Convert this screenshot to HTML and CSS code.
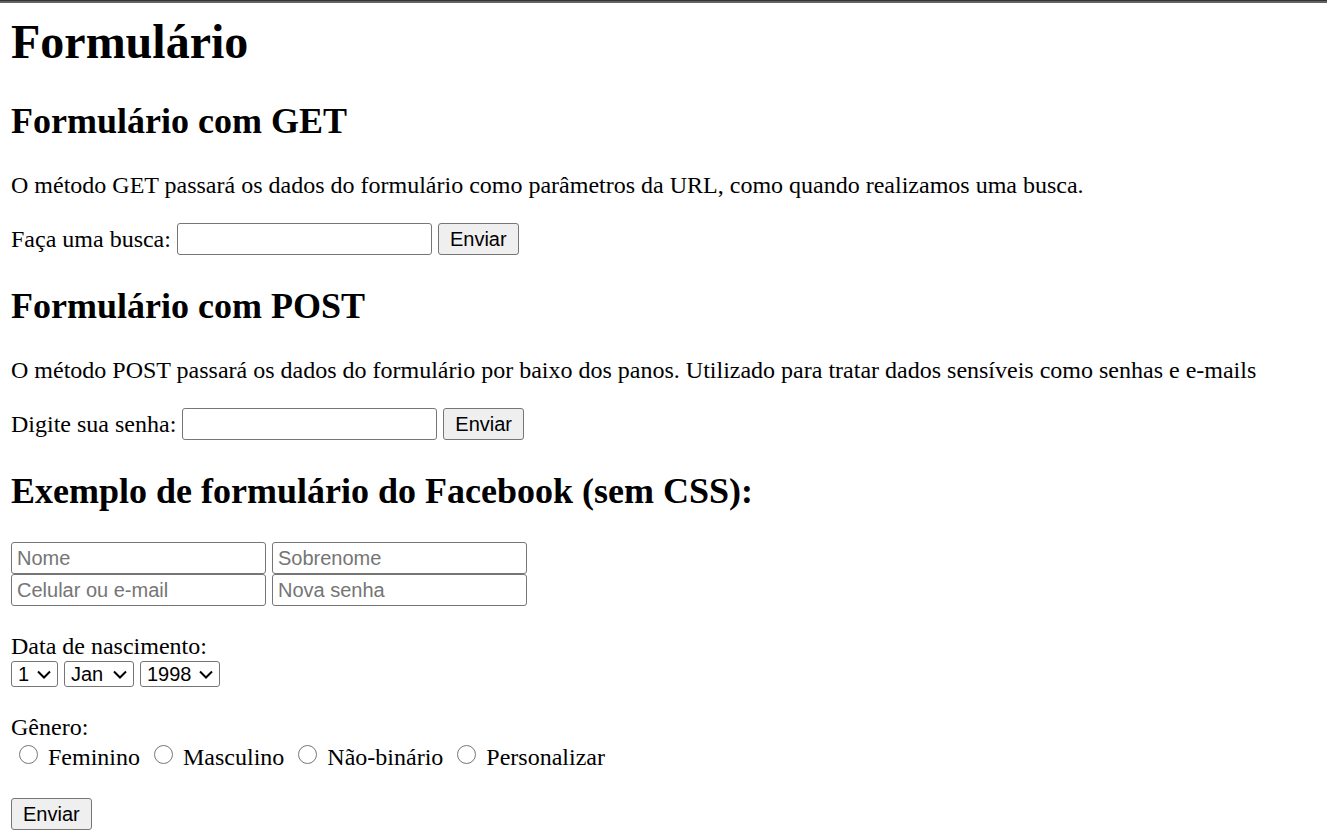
FILE: index.html
```html
<!DOCTYPE html>
<html lang="pt-BR">
<head>
<meta charset="utf-8">
<title>Formulário</title>
<link rel="stylesheet" href="styles.css">
</head>
<body>
<main class="page">
  <h1 class="title">Formulário</h1>

  <h2 class="heading">Formulário com GET</h2>
  <p class="text">O método GET passará os dados do formulário como parâmetros da URL, como quando realizamos uma busca.</p>
  <form class="row">
    <label for="busca">Faça uma busca:</label>
    <input class="field" type="text" id="busca" name="busca">
    <button class="button" type="submit">Enviar</button>
  </form>

  <h2 class="heading">Formulário com POST</h2>
  <p class="text">O método POST passará os dados do formulário por baixo dos panos. Utilizado para tratar dados sensíveis como senhas e e-mails</p>
  <form class="row" method="post">
    <label for="senha">Digite sua senha:</label>
    <input class="field" type="password" id="senha" name="senha">
    <button class="button" type="submit">Enviar</button>
  </form>

  <h2 class="heading">Exemplo de formulário do Facebook (sem CSS):</h2>
  <form class="signup" method="post">
    <div class="names">
      <div class="row">
        <input class="field" type="text" name="nome" placeholder="Nome" aria-label="Nome">
        <input class="field" type="text" name="sobrenome" placeholder="Sobrenome" aria-label="Sobrenome">
      </div>
      <div class="row">
        <input class="field" type="text" name="contato" placeholder="Celular ou e-mail" aria-label="Celular ou e-mail">
        <input class="field" type="password" name="nova-senha" placeholder="Nova senha" aria-label="Nova senha">
      </div>
    </div>
    <div class="group" role="group" aria-labelledby="nascimento">
      <div class="caption" id="nascimento">Data de nascimento:</div>
      <div class="row">
        <span class="picker"><select class="select day" name="dia" aria-label="Dia"><option>1</option></select><svg class="chevron" viewBox="0 0 14 9"><path d="M1 1.5 7 7.5 13 1.5"/></svg></span>
        <span class="picker"><select class="select month" name="mes" aria-label="Mês"><option>Jan</option></select><svg class="chevron" viewBox="0 0 14 9"><path d="M1 1.5 7 7.5 13 1.5"/></svg></span>
        <span class="picker"><select class="select year" name="ano" aria-label="Ano"><option>1998</option></select><svg class="chevron" viewBox="0 0 14 9"><path d="M1 1.5 7 7.5 13 1.5"/></svg></span>
      </div>
    </div>
    <div class="group" role="group" aria-labelledby="genero">
      <div class="caption" id="genero">Gênero:</div>
      <div class="options">
        <label class="option"><input class="radio" type="radio" name="genero">Feminino</label>
        <label class="option"><input class="radio" type="radio" name="genero">Masculino</label>
        <label class="option"><input class="radio" type="radio" name="genero">Não-binário</label>
        <label class="option"><input class="radio" type="radio" name="genero">Personalizar</label>
      </div>
    </div>
    <div><button class="button" type="submit">Enviar</button></div>
  </form>
</main>
</body>
</html>
```
FILE: styles.css
```css
* { box-sizing: border-box; }

body {
  margin: 0;
  border-top: 1px solid #343234;
  background: #fff;
  color: #000;
  font: 24px/28px "Liberation Serif", "Times New Roman", serif;
}

.page { padding: 12px 11px 8px; border-top: 2px solid #636163; }

.title { margin: 0 0 32px; font-size: 48px; line-height: 54px; }

.heading { margin: 0 0 30px; font-size: 36px; line-height: 40px; }

.text { margin: 0 0 24px; }

.row { display: flex; align-items: center; gap: 6px; }

.row + .heading { margin-top: 31px; margin-bottom: 30px; }

.signup { padding-top: 1px; }

.field, .button, .select {
  font: 20px/24px "Liberation Sans", Arial, sans-serif;
  border: 1px solid #767676;
  border-radius: 3px;
  color: #000;
}

.field { width: 255px; height: 32px; padding: 0 5px; background: #fff; }

.field::placeholder { color: #757575; opacity: 1; }

.button { height: 32px; padding: 0 11px; background: #efefef; }

.names, .group { margin-bottom: 26px; }

.caption { padding-bottom: 1px; }

.picker { position: relative; display: flex; }

.select { appearance: none; height: 26px; padding: 0 6px; background: #fff; }

.day { width: 47px; }
.month { width: 70px; }
.year { width: 80px; }

.chevron {
  position: absolute;
  right: 7px;
  top: 9px;
  width: 14px;
  height: 9px;
  fill: none;
  stroke: #000;
  stroke-width: 2;
  pointer-events: none;
}

.options { display: flex; align-items: center; gap: 14px; padding: 1px 8px 1px; }

.option { display: flex; align-items: center; gap: 10px; }

.radio {
  appearance: none;
  width: 19px;
  height: 19px;
  margin: 0 0 5px;
  border: 1px solid #767676;
  border-radius: 50%;
  background: #fff;
}

.radio:checked { box-shadow: inset 0 0 0 4px #fff; background: #0075ff; }
```
